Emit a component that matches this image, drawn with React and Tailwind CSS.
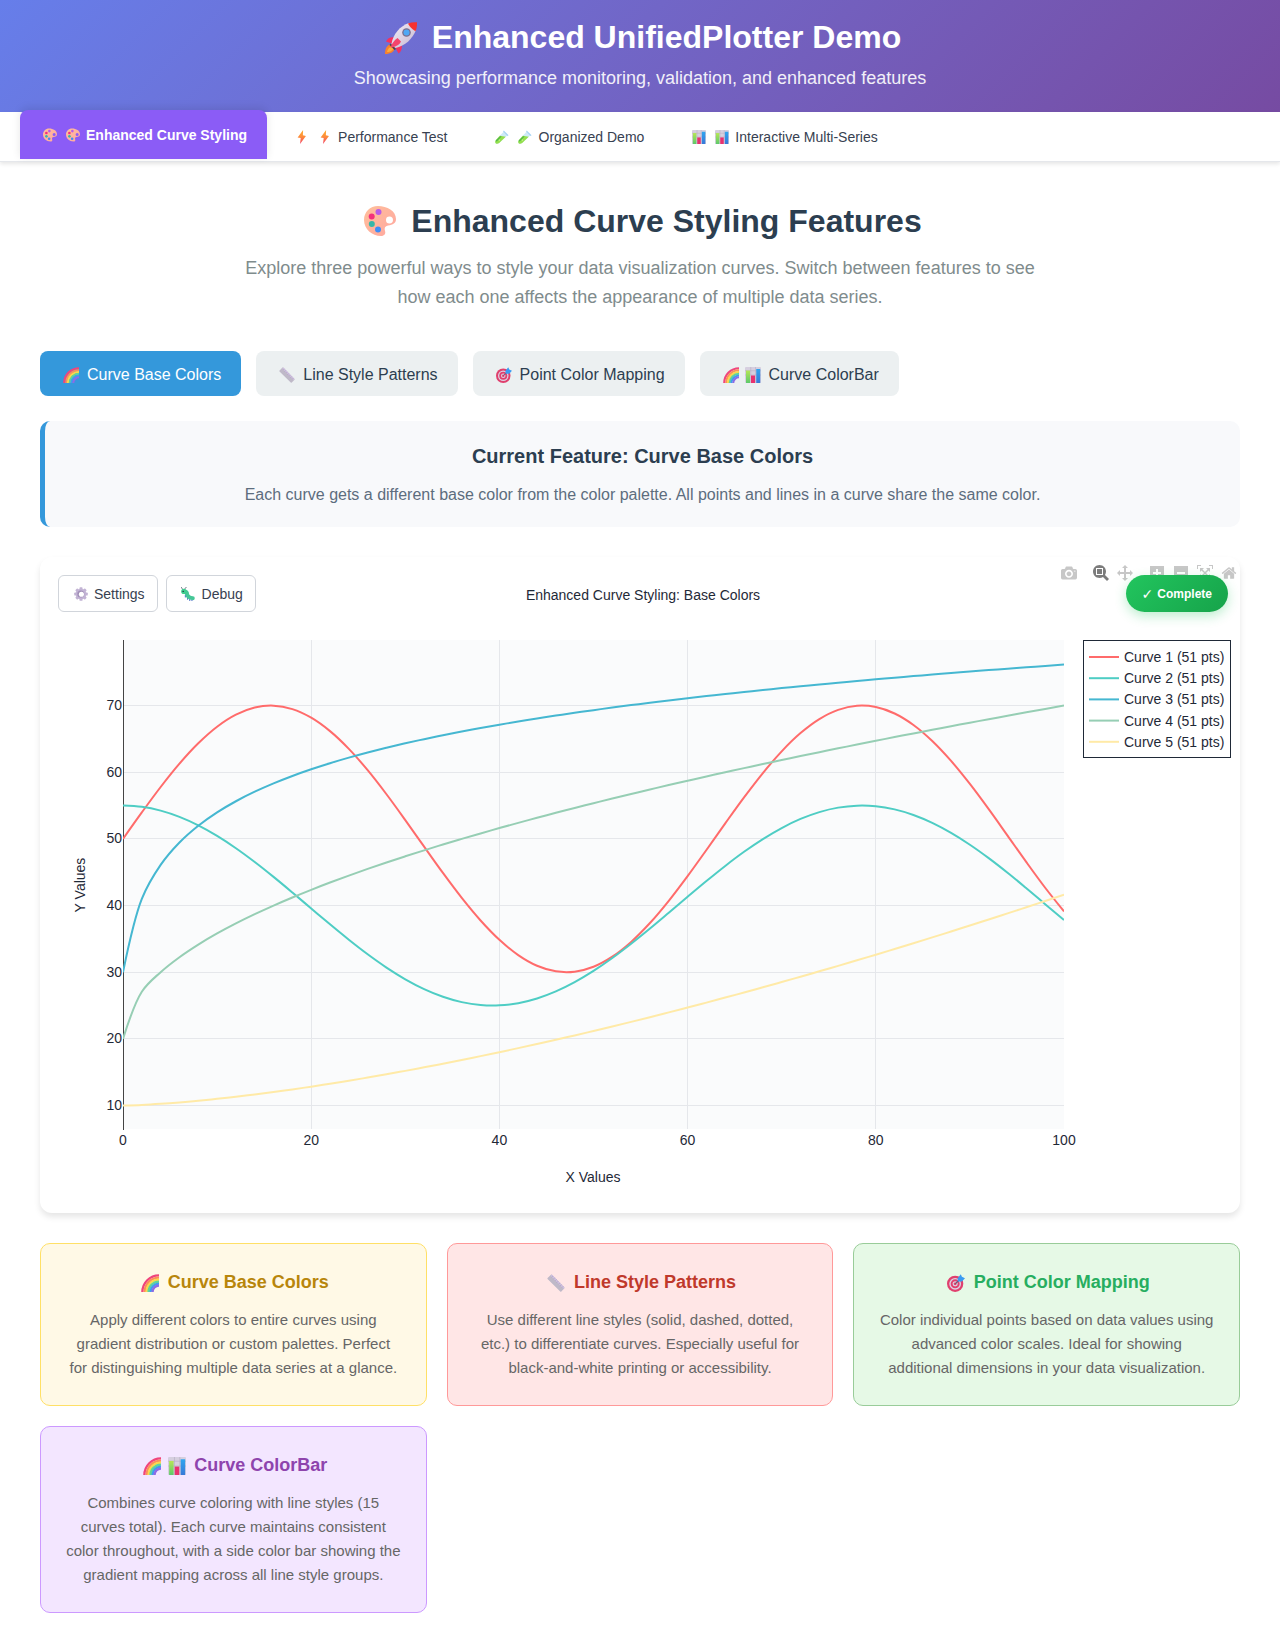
import React, { useId } from "react";

/* ---------- Emoji-style icons ---------- */

function Rocket() {
  const id = useId();
  return (
    <svg viewBox="0 0 32 32" className="h-full w-full" aria-hidden="true">
      <defs>
        <linearGradient id={id} x1="0" y1="0" x2="1" y2="1">
          <stop offset="0" stopColor="#f5eef8" />
          <stop offset="1" stopColor="#c4b6cf" />
        </linearGradient>
      </defs>
      <path d="M8 22 C3 22 0 25 0 32 C5.500 32 9.500 30 10 25 Z" fill="#f9822b" />
      <path d="M7.500 24 C4.500 25 2.500 27 2 30 C5 30 8 28.500 8.500 26 Z" fill="#fdb03c" />
      <path d="M10 15.500 C6 14.500 2.500 16 1 19.500 L8 22 Z" fill="#f4315f" />
      <path d="M16.500 22 C17.500 26 16.500 29.500 13.500 31.500 L10 25 Z" fill="#f4315f" />
      <path d="M24 1 C15 4 8 12 6.500 22 L10.500 26 C20 24 27.500 17 31 8 Z" fill={`url(#${id})`} />
      <path d="M23 1.500 C26 0.300 29 0 32 0.300 C32.200 3.500 31.800 6.500 30.500 9.200 C28.500 8 24.500 5 23 1.500 Z" fill="#f8312f" />
      <path d="M5.500 21.500 L11 27 L9.500 28 L4.500 23 Z" fill="#4a4259" />
      <path d="M12.500 16 C9.500 18 6.500 22 5.500 25.500 C9.500 25.500 14.500 23 16 19.500 Z" fill="#f4446c" />
      <circle cx="21.500" cy="10.500" r="4.300" fill="#7b6f8e" />
      <circle cx="21.500" cy="10.500" r="3" fill="#4fa8f5" />
    </svg>
  );
}

function Palette() {
  const id = useId();
  return (
    <svg viewBox="0 0 32 32" className="h-full w-full" aria-hidden="true">
      <defs>
        <linearGradient id={id} x1="0" y1="0" x2="1" y2="1">
          <stop offset="0" stopColor="#ffbf9b" />
          <stop offset="1" stopColor="#ffa7a0" />
        </linearGradient>
      </defs>
      <path
        fillRule="evenodd"
        d="M14 1 C6 1 0 7 0 15 C0 24 8 31 17 31 C20.500 31 22 28.500 21 26 C20 23 21 21 24 20.500 C29 20 32 18 32 14 C32 6 23 1 14 1 Z M25.500 11.500 a3.500 3.500 0 1 1 -0.010 7 a3.500 3.500 0 0 1 0.010 -7 Z"
        fill={`url(#${id})`}
      />
      <circle cx="14.500" cy="7" r="3" fill="#b95ae8" />
      <circle cx="7.700" cy="11.500" r="3" fill="#f4307c" />
      <circle cx="7.800" cy="19" r="3" fill="#36b7a9" />
      <circle cx="14" cy="24.500" r="3" fill="#3f8df7" />
    </svg>
  );
}

function Bolt() {
  const id = useId();
  return (
    <svg viewBox="0 0 32 32" className="h-full w-full" aria-hidden="true">
      <defs>
        <linearGradient id={id} x1="0" y1="0" x2="0" y2="1">
          <stop offset="0" stopColor="#ffb02e" />
          <stop offset="0.500" stopColor="#fd8a3b" />
          <stop offset="1" stopColor="#f2426c" />
        </linearGradient>
      </defs>
      <path d="M18.500 0 L6 17 L13 18.500 L11.500 32 L25 13.500 L18 12 Z" fill={`url(#${id})`} />
    </svg>
  );
}

function Tube() {
  return (
    <svg viewBox="0 0 32 32" className="h-full w-full" aria-hidden="true">
      <path d="M20 3.500 L28.500 12 L9.500 29.500 C6.500 32 3 31.500 1.500 30 C-0.300 28 -0.300 25 2.500 22 Z" fill="#cfeaf7" />
      <path d="M11 13 L24.500 15.500 L9.500 29.500 C6.500 32 3 31.500 1.500 30 C-0.300 28 -0.300 25 2.500 22 Z" fill="#95e04d" />
      <path d="M2 24 L12 14.500 L15 15 L3.500 27 Z" fill="#4fb648" />
      <path d="M20 1 L31 12 L28.500 13.500 L18.500 3.500 Z" fill="#a5d2f3" />
      <circle cx="10" cy="23" r="1.500" fill="#d4f7a8" />
    </svg>
  );
}

function BarChart() {
  const id = useId();
  return (
    <svg viewBox="0 0 32 32" className="h-full w-full" aria-hidden="true">
      <defs>
        <linearGradient id={`${id}g`} x1="0" y1="0" x2="0" y2="1">
          <stop offset="0" stopColor="#b5e655" />
          <stop offset="1" stopColor="#5cc96b" />
        </linearGradient>
        <linearGradient id={`${id}b`} x1="0" y1="0" x2="0" y2="1">
          <stop offset="0" stopColor="#2fa5f0" />
          <stop offset="1" stopColor="#3878d8" />
        </linearGradient>
      </defs>
      <rect x="0" y="0" width="32" height="32" rx="2" fill="#d6cfdf" />
      <path d="M11.500 0 V32 M21 0 V32 M0 7.500 H32 M0 16 H32" stroke="#b3a9c2" strokeWidth="1" />
      <rect x="2" y="7" width="8" height="25" fill={`url(#${id}g)`} />
      <rect x="12" y="17" width="8" height="15" fill="#e8316f" />
      <rect x="22.500" y="4" width="8" height="28" fill={`url(#${id}b)`} />
    </svg>
  );
}

function Rainbow() {
  const bands = [
    [29.5, "#f0457c"],
    [25.5, "#fb8f5a"],
    [22, "#fbd84b"],
    [18.5, "#5fd49a"],
    [15, "#3e9df0"],
    [11.5, "#8d6be6"],
  ];
  return (
    <svg viewBox="0 0 32 32" className="h-full w-full" aria-hidden="true">
      {bands.map(([r, color]) => (
        <path key={color} d={`M${32 - r} 32 A${r} ${r} 0 0 1 32 ${32 - r}`} fill="none" stroke={color} strokeWidth="4.200" />
      ))}
    </svg>
  );
}

function Ruler() {
  return (
    <svg viewBox="0 0 32 32" className="h-full w-full" aria-hidden="true">
      <path d="M8.500 1 L31 24 Q31.500 25 31 25.500 L25.500 31 Q24.500 31.800 23.500 31 L1 9 Q0.300 8 1 7 L7 1.200 Q7.800 0.400 8.500 1 Z" fill="#bfb9c8" />
      <path d="M8.500 1 L31 24 L29 26 L6.500 3 Z" fill="#cfc0e0" />
      <path
        d="M11 3.500 l-2.500 2.500 M14 6.500 l-3 3 M17 9.500 l-2.500 2.500 M20 12.700 l-3 3 M23 15.700 l-2.500 2.500 M26 18.700 l-3 3 M29 21.800 l-2.500 2.500"
        stroke="#a794bd"
        strokeWidth="1"
      />
    </svg>
  );
}

function Target() {
  return (
    <svg viewBox="0 0 32 32" className="h-full w-full" aria-hidden="true">
      <circle cx="14.500" cy="17.500" r="14.500" fill="#e0406e" />
      <circle cx="14.500" cy="17.500" r="10.500" fill="#dcd3e4" />
      <circle cx="14.500" cy="17.500" r="8" fill="#e0406e" />
      <circle cx="14.500" cy="17.500" r="4.500" fill="#dcd3e4" />
      <circle cx="14.500" cy="17.500" r="2.500" fill="#e0406e" />
      <path d="M15 17 L25 8" stroke="#5c5470" strokeWidth="1.800" />
      <path d="M19 7.500 L24.500 0.500 L26.500 5 L32 7.500 L26.500 13.500 L19 13.500 Z" fill="#3a9bf2" />
    </svg>
  );
}

function Gear() {
  return (
    <svg viewBox="0 0 32 32" className="h-full w-full" aria-hidden="true">
      <g fill="#c2b3d4">
        {[0, 45, 90, 135].map((a) => (
          <rect key={a} x="12.500" y="0.500" width="7" height="31" rx="2" transform={`rotate(${a} 16 16)`} />
        ))}
        <circle cx="16" cy="16" r="12" />
      </g>
      <circle cx="15.500" cy="16" r="8" fill="#a290b8" />
      <circle cx="17" cy="16.500" r="5.800" fill="#ffffff" />
    </svg>
  );
}

function Bug() {
  return (
    <svg viewBox="0 0 32 32" className="h-full w-full" aria-hidden="true">
      <path d="M4 6 L1 1 M8 5 L12 0.500" stroke="#4a5a6a" strokeWidth="1.800" strokeLinecap="round" />
      <path d="M10 18 v5 M15 24 v4 M20 27 v4 M25 28 v3.500" stroke="#5577c9" strokeWidth="2.500" strokeLinecap="round" />
      <path
        d="M7 10 C12 10 14 13 14 17 C15 22 18 25 27 25.500"
        fill="none"
        stroke="#45c796"
        strokeWidth="9"
        strokeLinecap="round"
      />
      <circle cx="6.500" cy="10" r="6" fill="#3fce8e" />
      <circle cx="5" cy="10" r="1.700" fill="#223344" />
    </svg>
  );
}

const EMOJI_BOX = {
  sm: "inline-flex h-[14px] w-[19px] shrink-0 justify-center",
  md: "inline-flex h-4 w-[22px] shrink-0 justify-center",
  lg: "inline-flex h-[18px] w-[25px] shrink-0 justify-center",
  xl: "inline-flex h-8 w-11 shrink-0 justify-center",
};
const EMOJI_ART = {
  sm: "w-[14px]",
  md: "w-4",
  lg: "w-[18px]",
  xl: "w-8",
};

function Emoji({ icon: Icon, size }) {
  return (
    <span className={EMOJI_BOX[size]}>
      <span className={EMOJI_ART[size]}>
        <Icon />
      </span>
    </span>
  );
}

/* ---------- Data ---------- */

const TABS = [
  { label: "Enhanced Curve Styling", icon: Palette, active: true },
  { label: "Performance Test", icon: Bolt },
  { label: "Organized Demo", icon: Tube },
  { label: "Interactive Multi-Series", icon: BarChart },
];

const FEATURES = [
  { label: "Curve Base Colors", icons: [Rainbow], active: true },
  { label: "Line Style Patterns", icons: [Ruler] },
  { label: "Point Color Mapping", icons: [Target] },
  { label: "Curve ColorBar", icons: [Rainbow, BarChart] },
];

const CARDS = [
  {
    title: "Curve Base Colors",
    icons: [Rainbow],
    box: "border-[#ffe066] bg-[#fff9e6]",
    heading: "text-[#b8860b]",
    text: "Apply different colors to entire curves using gradient distribution or custom palettes. Perfect for distinguishing multiple data series at a glance.",
  },
  {
    title: "Line Style Patterns",
    icons: [Ruler],
    box: "border-[#ff9999] bg-[#ffe6e6]",
    heading: "text-[#c0392b]",
    text: "Use different line styles (solid, dashed, dotted, etc.) to differentiate curves. Especially useful for black-and-white printing or accessibility.",
  },
  {
    title: "Point Color Mapping",
    icons: [Target],
    box: "border-[#99cc99] bg-[#e6f9e6]",
    heading: "text-[#27ae60]",
    text: "Color individual points based on data values using advanced color scales. Ideal for showing additional dimensions in your data visualization.",
  },
  {
    title: "Curve ColorBar",
    icons: [Rainbow, BarChart],
    box: "border-[#cc99ff] bg-[#f3e6ff]",
    heading: "text-[#8e44ad]",
    text: "Combines curve coloring with line styles (15 curves total). Each curve maintains consistent color throughout, with a side color bar showing the gradient mapping across all line style groups.",
  },
];

const CURVES = [
  { name: "Curve 1 (51 pts)", color: "#ff6b6b", fn: (x) => 50 + 20 * Math.sin(x * 0.1) },
  { name: "Curve 2 (51 pts)", color: "#4ecdc4", fn: (x) => 40 + 15 * Math.cos(x * 0.08) },
  { name: "Curve 3 (51 pts)", color: "#45b7d1", fn: (x) => 30 + 10 * Math.log(x + 1) },
  { name: "Curve 4 (51 pts)", color: "#96ceb4", fn: (x) => 20 + 5 * Math.sqrt(x) },
  { name: "Curve 5 (51 pts)", color: "#ffeaa7", fn: (x) => 10 + Math.pow(x / 10, 1.5) },
];

/* ---------- Chart ---------- */

const PLOT = { left: 83, right: 1024, top: 83, bottom: 572 };
const sx = (v) => PLOT.left + (v * (PLOT.right - PLOT.left)) / 100;
const sy = (v) => 548.5 - (v - 10) * 6.665;

function tangents(p, c, n) {
  const d1 = [p[0] - c[0], p[1] - c[1]];
  const d2 = [n[0] - c[0], n[1] - c[1]];
  const a = Math.pow(d1[0] ** 2 + d1[1] ** 2, 0.25);
  const b = Math.pow(d2[0] ** 2 + d2[1] ** 2, 0.25);
  const num = [b * b * d1[0] - a * a * d2[0], b * b * d1[1] - a * a * d2[1]];
  const den1 = 3 * b * (a + b);
  const den2 = 3 * a * (a + b);
  return [
    [c[0] + num[0] / den1, c[1] + num[1] / den1],
    [c[0] - num[0] / den2, c[1] - num[1] / den2],
  ];
}

function spline(points) {
  const t = points.slice(1, -1).map((c, i) => tangents(points[i], c, points[i + 2]));
  const f = (p) => `${p[0].toFixed(2)},${p[1].toFixed(2)}`;
  let d = `M${f(points[0])}Q${f(t[0][0])} ${f(points[1])}`;
  for (let i = 2; i < points.length - 1; i++) {
    d += `C${f(t[i - 2][1])} ${f(t[i - 1][0])} ${f(points[i])}`;
  }
  d += `Q${f(t[t.length - 1][1])} ${f(points[points.length - 1])}`;
  return d;
}

const curvePath = (fn) => spline(Array.from({ length: 51 }, (_, i) => [sx(i * 2), sy(fn(i * 2))]));

function Chart() {
  const clip = useId();
  return (
    <svg
      viewBox="0 0 1200 656"
      className="block w-full"
      role="img"
      aria-label="Enhanced Curve Styling: Base Colors"
      fontSize="14"
      fill="#1f2937"
    >
      <defs>
        <clipPath id={clip}>
          <rect x={PLOT.left} y={PLOT.top} width={PLOT.right - PLOT.left} height={PLOT.bottom - PLOT.top} />
        </clipPath>
      </defs>
      <rect
        x={PLOT.left}
        y={PLOT.top}
        width={PLOT.right - PLOT.left}
        height={PLOT.bottom - PLOT.top}
        fill="#fafbfc"
      />
      <g stroke="#e5e7eb" strokeWidth="1">
        {[20, 40, 60, 80].map((v) => (
          <line
            key={v}
            x1={Math.floor(sx(v)) + 0.5}
            x2={Math.floor(sx(v)) + 0.5}
            y1={PLOT.top}
            y2={PLOT.bottom}
          />
        ))}
        {[10, 20, 30, 40, 50, 60, 70].map((v) => (
          <line key={v} x1={PLOT.left} x2={PLOT.right} y1={Math.floor(sy(v)) + 0.5} y2={Math.floor(sy(v)) + 0.5} />
        ))}
      </g>
      <rect
        x={PLOT.left}
        y={PLOT.top}
        width="1"
        height={PLOT.bottom - PLOT.top + 1}
        fill="#444444"
        shapeRendering="crispEdges"
      />
      <g clipPath={`url(#${clip})`} fill="none" strokeWidth="2">
        {CURVES.map((c) => (
          <path key={c.name} d={curvePath(c.fn)} stroke={c.color} />
        ))}
      </g>
      <g textAnchor="middle">
        {[0, 20, 40, 60, 80, 100].map((v) => (
          <text key={v} x={sx(v)} y="588">
            {v}
          </text>
        ))}
        <text x="603" y="43">
          Enhanced Curve Styling: Base Colors
        </text>
        <text x="553" y="625">
          X Values
        </text>
        <text transform="translate(45 328) rotate(-90)">Y Values</text>
      </g>
      <g textAnchor="end">
        {[10, 20, 30, 40, 50, 60, 70].map((v) => (
          <text key={v} x="82" y={Math.floor(sy(v)) + 5}>
            {v}
          </text>
        ))}
      </g>
      <rect x="1043.500" y="83.500" width="147" height="117" fill="#ffffff" stroke="#1f2937" />
      {CURVES.map((c, i) => (
        <g key={c.name}>
          <line x1="1049" x2="1079" y1={100 + i * 21.2} y2={100 + i * 21.2} stroke={c.color} strokeWidth="2" />
          <text x="1084" y={Math.round(105 + i * 21.2)}>
            {c.name}
          </text>
        </g>
      ))}
    </svg>
  );
}

const MODEBAR = [
  [
    {
      name: "Download plot",
      width: 1000,
      d: "m500 450c-83 0-150-67-150-150 0-83 67-150 150-150 83 0 150 67 150 150 0 83-67 150-150 150z m400 150h-120c-16 0-34 13-39 29l-31 93c-6 15-23 28-40 28h-340c-16 0-34-13-39-28l-31-94c-6-15-23-28-40-28h-120c-55 0-100-45-100-100v-450c0-55 45-100 100-100h800c55 0 100 45 100 100v450c0 55-45 100-100 100z m-400-550c-138 0-250 112-250 250 0 138 112 250 250 250 138 0 250-112 250-250 0-138-112-250-250-250z m365 380c-19 0-35 16-35 35 0 19 16 35 35 35 19 0 35-16 35-35 0-19-16-35-35-35z",
    },
  ],
  [
    {
      name: "Zoom",
      active: true,
      width: 1000,
      d: "m1000-25l-250 251c40 63 63 138 63 218 0 224-182 406-407 406-224 0-406-182-406-406s183-406 407-406c80 0 155 22 218 62l250-250 125 125z m-812 250l0 438 437 0 0-438-437 0z m62 375l313 0 0-312-313 0 0 312z",
    },
    {
      name: "Pan",
      width: 1000,
      d: "m1000 350l-187 188 0-125-250 0 0 250 125 0-188 187-187-187 125 0 0-250-250 0 0 125-188-188 186-187 0 125 252 0 0-250-125 0 187-188 188 188-125 0 0 250 250 0 0-126 187 188z",
    },
  ],
  [
    {
      name: "Zoom in",
      width: 875,
      d: "m1 787l0-875 875 0 0 875-875 0z m687-500l-187 0 0-187-125 0 0 187-188 0 0 125 188 0 0 187 125 0 0-187 187 0 0-125z",
    },
    {
      name: "Zoom out",
      width: 875,
      d: "m0 788l0-876 875 0 0 876-875 0z m688-500l-500 0 0 125 500 0 0-125z",
    },
    {
      name: "Autoscale",
      width: 1000,
      d: "m250 850l-187 0-63 0 0-62 0-188 63 0 0 188 187 0 0 62z m688 0l-188 0 0-62 188 0 0-188 62 0 0 188 0 62-62 0z m-875-938l0 188-63 0 0-188 0-62 63 0 187 0 0 62-187 0z m875 188l0-188-188 0 0-62 188 0 62 0 0 62 0 188-62 0z m-125 188l-1 0-93-94-156 156 156 156 92-93 2 0 0 250-250 0 0-2 93-92-156-156-156 156 94 92 0 2-250 0 0-250 0 0 93 93 157-156-157-156-93 94 0 0 0-250 250 0 0 0-94 93 156 157 156-157-93-93 0 0 250 0 0 250z",
    },
    {
      name: "Reset axes",
      width: 928,
      d: "m786 296v-267q0-15-11-26t-25-10h-214v214h-143v-214h-214q-15 0-25 10t-11 26v267q0 1 0 2t0 2l321 264 321-264q1-1 1-4z m124 39l-34-41q-5-5-12-6h-2q-7 0-12 3l-386 322-386-322q-7-4-13-4-7 2-12 7l-35 41q-4 5-3 13t6 12l401 334q18 15 42 15t43-15l136-114v109q0 8 5 13t13 5h107q8 0 13-5t5-13v-227l122-102q5-5 6-12t-4-13z",
    },
  ],
];

function Modebar() {
  return (
    <div className="absolute top-2 -right-px flex gap-2">
      {MODEBAR.map((group) => (
        <div key={group[0].name} className="flex">
          {group.map((b) => (
            <button key={b.name} type="button" aria-label={b.name} className="flex h-4 w-6 items-center justify-center">
              <svg viewBox={`0 0 ${b.width} 1000`} className="h-4 w-4">
                <path
                  d={b.d}
                  transform="matrix(1 0 0 -1 0 850)"
                  fill={b.active ? "rgba(68,68,68,0.7)" : "rgba(68,68,68,0.3)"}
                />
              </svg>
            </button>
          ))}
        </div>
      ))}
    </div>
  );
}

/* ---------- Page ---------- */

export default function App() {
  return (
    <div className="min-h-full bg-white pb-5 font-['Liberation_Sans',Arial,sans-serif]">
      <header className="bg-linear-135 from-[#667eea] to-[#764ba2] px-5 pt-5 pb-[21px] text-center text-white">
        <h1 className="flex items-center justify-center gap-[9px] text-[32px] leading-[35px] font-bold">
          <Emoji icon={Rocket} size="xl" />
          Enhanced UnifiedPlotter Demo
        </h1>
        <p className="mt-[11px] text-lg leading-[25px] opacity-90">
          Showcasing performance monitoring, validation, and enhanced features
        </p>
      </header>

      <nav className="flex gap-[5px] border-b border-[#e5e7eb] bg-white px-5 shadow-[0_2px_4px_rgba(0,0,0,0.1)]">
        {TABS.map((tab) => (
          <button
            key={tab.label}
            type="button"
            className={
              tab.active
                ? "flex h-[49px] -translate-y-0.5 items-center gap-1 rounded-t-lg bg-[#8b5cf6] px-5 text-sm font-bold text-white shadow-[0_-2px_8px_rgba(0,0,0,0.1)]"
                : "flex h-[49px] items-center gap-1 px-5 text-sm text-[#374151]"
            }
          >
            <Emoji icon={tab.icon} size="sm" />
            <Emoji icon={tab.icon} size="sm" />
            {tab.label}
          </button>
        ))}
      </nav>

      <main className="px-10 pt-10">
        <section className="text-center">
          <h2 className="flex items-center justify-center gap-[9px] text-[32px] leading-[38px] font-bold text-[#2c3e50]">
            <Emoji icon={Palette} size="xl" />
            Enhanced Curve Styling Features
          </h2>
          <p className="mx-auto mt-[14px] max-w-[800px] text-lg leading-[29px] text-[#7f8c8d]">
            Explore three powerful ways to style your data visualization curves. Switch between features to see how each
            one affects the appearance of multiple data series.
          </p>
        </section>

        <div className="mt-[39px] flex flex-wrap gap-[15px]">
          {FEATURES.map((f) => (
            <button
              key={f.label}
              type="button"
              className={
                f.active
                  ? "flex h-[45px] items-center rounded-lg bg-[#3498db] px-5 pt-0.5 text-base text-white"
                  : "flex h-[45px] items-center rounded-lg bg-[#ecf0f1] px-5 pt-0.5 text-base text-[#2c3e50]"
              }
            >
              {f.icons.map((icon, i) => (
                <Emoji key={i} icon={icon} size="md" />
              ))}
              <span className="ml-[5px]">{f.label}</span>
            </button>
          ))}
        </div>

        <section className="mt-[25px] rounded-[10px] border-l-5 border-[#3498db] bg-[#f8f9fb] p-5 text-center">
          <h3 className="text-xl leading-[30px] font-bold text-[#2c3e50]">Current Feature: Curve Base Colors</h3>
          <p className="mt-3 text-base leading-6 text-[#5d6d7e]">
            Each curve gets a different base color from the color palette. All points and lines in a curve share the same
            color.
          </p>
        </section>

        <section className="relative mt-[30px] rounded-xl bg-white shadow-[0_4px_6px_rgba(0,0,0,0.1)]">
          <Chart />
          <Modebar />
          <div className="absolute top-[18px] left-[18px] flex gap-2">
            <button
              type="button"
              className="flex h-[37px] items-center gap-1 rounded-md border border-[#d1d5db] bg-white px-3 text-sm text-[#374151]"
            >
              <Emoji icon={Gear} size="sm" />
              Settings
            </button>
            <button
              type="button"
              className="flex h-[37px] items-center gap-1 rounded-md border border-[#d1d5db] bg-white px-3 text-sm text-[#374151]"
            >
              <Emoji icon={Bug} size="sm" />
              Debug
            </button>
          </div>
          <div className="absolute top-[18px] right-3 flex h-[37px] items-center gap-1 rounded-full bg-linear-135 from-[#22c55e] to-[#16a34a] px-4 text-xs font-bold text-white shadow-[0_4px_12px_rgba(34,197,94,0.3)]">
            <span className="font-['DejaVu_Sans',sans-serif] text-sm font-normal">✓</span>
            <span>Complete</span>
          </div>
        </section>

        <section className="mt-[30px] grid grid-cols-3 gap-5">
          {CARDS.map((card) => (
            <article key={card.title} className={`rounded-[10px] border px-[25px] pt-6 pb-[25px] text-center ${card.box}`}>
              <h4 className={`flex items-center justify-center text-lg leading-[29px] font-bold ${card.heading}`}>
                {card.icons.map((icon, i) => (
                  <Emoji key={i} icon={icon} size="lg" />
                ))}
                <span className="ml-[5px]">{card.title}</span>
              </h4>
              <p className="mt-[11px] text-[15px] leading-6 text-[#666666]">{card.text}</p>
            </article>
          ))}
        </section>
      </main>
    </div>
  );
}
